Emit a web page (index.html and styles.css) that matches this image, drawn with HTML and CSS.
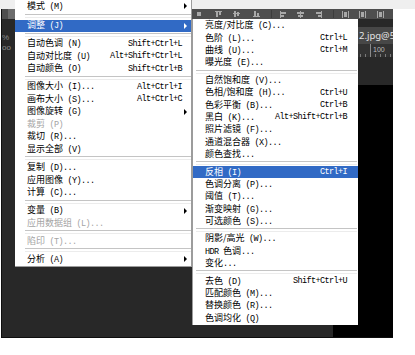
FILE: index.html
```html
<!DOCTYPE html>
<html lang="zh-CN">

<head>
    <meta charset="UTF-8" />
    <meta name="viewport" content="width=device-width, initial-scale=1.0" />
    <title>图像 - 调整</title>
    <link rel="stylesheet" href="styles.css">
</head>

<body>
    <div class="screen">
        <div class="topbar"></div>

        <div class="window">
            <div class="options">
                <svg class="align-icons" width="391" height="10" viewBox="0 0 391 10">
                    <rect x="6" y="0" width="7" height="10" fill="#6c6c6c" />
                    <g fill="#a8a8a8">
                        <rect x="195" y="3" width="4" height="4" />
                        <rect x="213" y="2" width="7" height="1" /><rect x="214" y="3" width="2" height="5" /><rect x="217" y="3" width="2" height="3" />
                        <rect x="231" y="4" width="7" height="1" /><rect x="232" y="2" width="2" height="6" /><rect x="235" y="3" width="2" height="4" />
                        <rect x="251" y="7" width="7" height="1" /><rect x="252" y="2" width="2" height="5" /><rect x="255" y="4" width="2" height="3" />
                        <rect x="278" y="2" width="1" height="7" /><rect x="279" y="3" width="5" height="2" /><rect x="279" y="6" width="3" height="2" />
                        <rect x="298" y="2" width="1" height="7" /><rect x="295" y="3" width="7" height="2" /><rect x="296" y="6" width="5" height="2" />
                        <rect x="319" y="2" width="1" height="7" /><rect x="314" y="3" width="5" height="2" /><rect x="316" y="6" width="3" height="2" />
                        <rect x="340" y="2" width="1" height="7" /><rect x="346" y="2" width="1" height="7" /><rect x="342" y="3" width="3" height="5" />
                        <rect x="357" y="2" width="1" height="7" /><rect x="363" y="2" width="1" height="7" /><rect x="359" y="3" width="3" height="5" />
                        <rect x="375" y="2" width="1" height="7" /><rect x="381" y="2" width="1" height="7" /><rect x="377" y="3" width="3" height="5" />
                    </g>
                    <rect x="269" y="1" width="1" height="8" fill="#3c3c3c" />
                    <rect x="331" y="1" width="1" height="8" fill="#3c3c3c" />
                </svg>
            </div>

            <div class="body">
                <div class="toolstrip">
                    <span>%</span>
                    <span>oo</span>
                </div>

                <div class="main">
                    <div class="tabs">
                        <div class="tab">2.jpg@50% (RGB/8)</div>
                    </div>

                    <div class="ruler">
                        <span class="ruler-label">100</span>
                    </div>

                    <div class="workspace">
                        <div class="pasteboard"></div>
                        <div class="canvas">
                            <svg class="sketch" width="60" height="260" viewBox="0 0 60 260">
                                <path d="M59 160 C56 172 52 182 53 194 C54 206 57 216 59 226" fill="none" stroke="#d8d8d8" stroke-width="1" />
                            </svg>
                        </div>
                    </div>
                </div>
            </div>
        </div>

        <!-- 图像 menu -->
        <div class="menu menu-main">
            <div class="item"><span class="label">模式<em> (M)</em></span><span class="arrow"></span></div>
            <div class="sep first"></div>
            <div class="item active"><span class="label">调整<em> (J)</em></span><span class="arrow"></span></div>
            <div class="sep"></div>
            <div class="item"><span class="label">自动色调<em> (N)</em></span><span class="keys">Shift+Ctrl+L</span></div>
            <div class="item"><span class="label">自动对比度<em> (U)</em></span><span class="keys">Alt+Shift+Ctrl+L</span></div>
            <div class="item"><span class="label">自动颜色<em> (O)</em></span><span class="keys">Shift+Ctrl+B</span></div>
            <div class="sep"></div>
            <div class="item"><span class="label">图像大小<em> (I)...</em></span><span class="keys">Alt+Ctrl+I</span></div>
            <div class="item"><span class="label">画布大小<em> (S)...</em></span><span class="keys">Alt+Ctrl+C</span></div>
            <div class="item"><span class="label">图像旋转<em> (G)</em></span><span class="arrow"></span></div>
            <div class="item disabled"><span class="label">裁剪<em> (P)</em></span></div>
            <div class="item"><span class="label">裁切<em> (R)...</em></span></div>
            <div class="item"><span class="label">显示全部<em> (V)</em></span></div>
            <div class="sep"></div>
            <div class="item"><span class="label">复制<em> (D)...</em></span></div>
            <div class="item"><span class="label">应用图像<em> (Y)...</em></span></div>
            <div class="item"><span class="label">计算<em> (C)...</em></span></div>
            <div class="sep"></div>
            <div class="item"><span class="label">变量<em> (B)</em></span><span class="arrow"></span></div>
            <div class="item disabled"><span class="label">应用数据组<em> (L)...</em></span></div>
            <div class="sep"></div>
            <div class="item disabled"><span class="label">陷印<em> (T)...</em></span></div>
            <div class="sep"></div>
            <div class="item"><span class="label">分析<em> (A)</em></span><span class="arrow"></span></div>
        </div>

        <!-- 调整 submenu -->
        <div class="menu menu-sub">
            <div class="item"><span class="label">亮度/对比度<em> (C)...</em></span></div>
            <div class="item"><span class="label">色阶<em> (L)...</em></span><span class="keys">Ctrl+L</span></div>
            <div class="item"><span class="label">曲线<em> (U)...</em></span><span class="keys">Ctrl+M</span></div>
            <div class="item"><span class="label">曝光度<em> (E)...</em></span></div>
            <div class="sep"></div>
            <div class="item"><span class="label">自然饱和度<em> (V)...</em></span></div>
            <div class="item"><span class="label">色相/饱和度<em> (H)...</em></span><span class="keys">Ctrl+U</span></div>
            <div class="item"><span class="label">色彩平衡<em> (B)...</em></span><span class="keys">Ctrl+B</span></div>
            <div class="item"><span class="label">黑白<em> (K)...</em></span><span class="keys">Alt+Shift+Ctrl+B</span></div>
            <div class="item"><span class="label">照片滤镜<em> (F)...</em></span></div>
            <div class="item"><span class="label">通道混合器<em> (X)...</em></span></div>
            <div class="item"><span class="label">颜色查找<em>...</em></span></div>
            <div class="sep"></div>
            <div class="item active"><span class="label">反相<em> (I)</em></span><span class="keys">Ctrl+I</span></div>
            <div class="item"><span class="label">色调分离<em> (P)...</em></span></div>
            <div class="item"><span class="label">阈值<em> (T)...</em></span></div>
            <div class="item"><span class="label">渐变映射<em> (G)...</em></span></div>
            <div class="item"><span class="label">可选颜色<em> (S)...</em></span></div>
            <div class="sep"></div>
            <div class="item"><span class="label">阴影/高光<em> (W)...</em></span></div>
            <div class="item"><span class="label"><em>HDR </em>色调<em>...</em></span></div>
            <div class="item"><span class="label">变化<em>...</em></span></div>
            <div class="sep"></div>
            <div class="item"><span class="label">去色<em> (D)</em></span><span class="keys">Shift+Ctrl+U</span></div>
            <div class="item"><span class="label">匹配颜色<em> (M)...</em></span></div>
            <div class="item"><span class="label">替换颜色<em> (R)...</em></span></div>
            <div class="item"><span class="label">色调均化<em> (Q)</em></span></div>
        </div>
    </div>
</body>

</html>
```

FILE: styles.css
```css
* {
    box-sizing: border-box;
}

body {
    margin: 0;
    background: #fff;
    font-family: "Noto Sans CJK SC", "Noto Sans", sans-serif;
}

.screen {
    position: relative;
    width: 415px;
    height: 355px;
    overflow: hidden;
}

.topbar {
    height: 9px;
    background: #efefef;
}

/* Photoshop window behind the menus */
.window {
    margin-left: 1px;
    width: 392px;
    height: 329px;
    background: #282828;
    border-left: 1px solid #0e0e0e;
    border-bottom: 1px solid #0e0e0e;
    display: flex;
    flex-direction: column;
    overflow: hidden;
}

.options {
    flex: none;
    height: 10px;
    background: #4e4e4e;
}

.align-icons {
    display: block;
}

.body {
    flex: 1;
    display: flex;
}

.toolstrip {
    flex: none;
    width: 13px;
    display: flex;
    flex-direction: column;
    padding-top: 14px;
    color: #8c8c8c;
    font-family: "Liberation Sans", sans-serif;
    font-size: 8px;
    line-height: 10px;
}

.main {
    flex: 1;
    display: flex;
    flex-direction: column;
}

.tabs {
    flex: none;
    height: 25px;
    padding-top: 8px;
}

.tab {
    margin-left: 342px;
    width: 200px;
    height: 17px;
    padding-left: 2px;
    background: #474747;
    color: #e4e4e4;
    font-family: "Noto Sans", sans-serif;
    font-size: 9.5px;
    line-height: 17px;
    white-space: nowrap;
}

.ruler {
    flex: none;
    height: 13px;
    padding-left: 358px;
    background: linear-gradient(#8a8a8a, #8a8a8a) 355px 0 / 1px 13px no-repeat,
        repeating-linear-gradient(90deg, #7a7a7a 0 1px, transparent 1px 5px) 0 10px / 100% 3px no-repeat,
        #323232;
    color: #bcbcbc;
    font-family: "Liberation Sans", sans-serif;
    font-size: 7px;
    line-height: 11px;
}

.workspace {
    flex: 1;
    display: flex;
}

.pasteboard {
    flex: none;
    width: 318px;
}

.canvas {
    flex: 1;
    margin-top: 28px;
    background: #000;
}

.sketch {
    display: block;
    margin-left: auto;
}

/* menus */
.menu {
    position: absolute;
    background: #fff;
    color: #000;
    font-size: 9px;
}

.menu-main {
    left: 15px;
    top: 0;
    width: 177px;
    border-right: 1px solid #9c9c9c;
    border-bottom: 1px solid #9c9c9c;
}

.menu-sub {
    left: 192px;
    top: 19px;
    width: 166px;
    border-left: 1px solid #9c9c9c;
    padding: 0.5px 0 1px;
}

.item {
    display: flex;
    align-items: center;
    height: 12.5px;
    padding: 0 4px 0 12px;
    line-height: 12px;
    white-space: nowrap;
}

.menu-sub .item {
    height: 12.4px;
    padding: 0 11px 0 12px;
}

.item em {
    font-style: normal;
    font-family: "Liberation Mono", monospace;
    font-size: 8.5px;
    letter-spacing: -0.6px;
}

.keys {
    margin-left: auto;
    margin-right: 5px;
    font-family: "Liberation Mono", monospace;
    font-size: 8.5px;
    letter-spacing: -0.6px;
}

.menu-sub .keys {
    margin-right: 0;
}

.arrow {
    margin-left: auto;
    width: 0;
    height: 0;
    border-left: 3px solid #000;
    border-top: 3px solid transparent;
    border-bottom: 3px solid transparent;
}

.item.active {
    background: #316ac5;
    color: #fff;
}

.item.active .arrow {
    border-left-color: #fff;
}

.item.disabled {
    color: #a4a4a4;
}

.sep {
    height: 5.6px;
    padding-left: 10px;
    display: flex;
    align-items: center;
}

.sep.first {
    height: 7px;
}

.sep::before {
    content: "";
    display: block;
    width: 100%;
    height: 2px;
    border-top: 1px solid #c4c4c4;
    border-bottom: 1px solid #ececec;
}

.menu-sub .sep {
    height: 5px;
    padding: 0 1px 0 3px;
}
```
